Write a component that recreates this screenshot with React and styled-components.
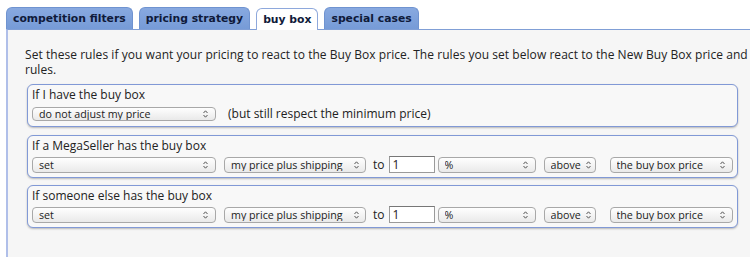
import styled, { createGlobalStyle } from 'styled-components';

const GlobalStyle = createGlobalStyle`
  body {
    margin: 0;
    background: #ffffff;
    overflow: hidden;
    font-family: "Open Sans", "Liberation Sans", Arial, sans-serif;
    color: #222;
  }
`;

const Page = styled.div`
  padding: 7px 0 0 6px;
  height: 257px;
  box-sizing: border-box;
  overflow: hidden;
`;

const TabBar = styled.div`
  display: flex;
  align-items: flex-end;
  gap: 6px;
  height: 22px;
  position: relative;
  z-index: 1;
`;

const Tab = styled.div`
  height: 22px;
  box-sizing: border-box;
  padding: 0 6px;
  display: flex;
  align-items: center;
  font-family: "DejaVu Sans", Verdana, sans-serif;
  font-weight: bold;
  font-size: 10.8px;
  color: #0f1a3a;
  border: 1px solid ${(p) => (p.$active ? '#8ea8dc' : '#6f93d0')};
  border-bottom: none;
  border-radius: 6px 6px 0 0;
  background: ${(p) =>
    p.$active ? '#ffffff' : 'linear-gradient(#88a9e0, #769bd7)'};
  margin-bottom: ${(p) => (p.$active ? '-1px' : '0')};
`;

const Panel = styled.div`
  border-top: 1px solid #809fd6;
  border-left: 2px solid #b0bfe9;
  background: #f6f6f6;
  height: 240px;
  padding: 17px 0 0 17px;
`;

const Intro = styled.p`
  margin: 0;
  width: 732px;
  font-size: 12px;
  line-height: 15px;
  letter-spacing: 0.05px;
`;

const RuleBox = styled.div`
  width: 711px;
  height: 43px;
  box-sizing: border-box;
  margin: ${(p) => p.$top}px 0 0 2px;
  padding: 1px 4px 0;
  border: 1px solid #8199d6;
  border-radius: 6px;
  background: #f8f8f8;
  box-shadow: 0 1px 2px rgba(0, 0, 0, 0.25);
`;

const RuleTitle = styled.div`
  font-size: 12px;
  line-height: 17px;
`;

const Row = styled.div`
  display: flex;
  align-items: center;
  margin-top: 2px;
`;

const SelectWrap = styled.div`
  position: relative;
  width: ${(p) => p.$w}px;
  margin-left: ${(p) => p.$ml || 0}px;
  flex: none;
`;

const NativeSelect = styled.select`
  appearance: none;
  -webkit-appearance: none;
  display: block;
  width: 100%;
  height: ${(p) => (p.$small ? 14 : 16)}px;
  box-sizing: border-box;
  margin: 0;
  padding: 0 10px 0 6px;
  border: 1px solid #a8a8a8;
  border-radius: 4px;
  background: linear-gradient(#fefefe, #e9e9e9);
  font-family: "Open Sans", "Liberation Sans", Arial, sans-serif;
  font-size: 10.7px;
  color: #222;
  line-height: 12px;
  outline: none;
`;

const Arrows = styled.svg`
  position: absolute;
  right: ${(p) => p.$r}px;
  top: 50%;
  transform: translateY(-50%);
  pointer-events: none;
`;

const Note = styled.span`
  font-size: 12px;
  margin-left: ${(p) => p.$ml || 0}px;
`;

const NumberInput = styled.input`
  width: 46px;
  height: 17px;
  box-sizing: border-box;
  margin: 0 0 0 ${(p) => p.$ml}px;
  padding: 0 3px;
  border: 1px solid #9a9a9a;
  border-top-color: #777;
  background: #fff;
  font-family: "Open Sans", "Liberation Sans", Arial, sans-serif;
  font-size: 12px;
  color: #222;
  outline: none;
`;

const Select = ({ w, ml, small, value, arrowRight = 8 }) => (
  <SelectWrap $w={w} $ml={ml}>
    <NativeSelect $small={small} defaultValue={value}>
      <option>{value}</option>
    </NativeSelect>
    <Arrows $r={arrowRight} width="5" height="8" viewBox="0 0 5 8">
      <path d="M0.5 3 L2.5 0.8 L4.5 3" fill="none" stroke="#555" strokeWidth="1" />
      <path d="M0.5 5 L2.5 7.2 L4.5 5" fill="none" stroke="#555" strokeWidth="1" />
    </Arrows>
  </SelectWrap>
);

const AdjustRow = () => (
  <Row>
    <Select w={184} value="set" />
    <Select w={142} ml={8} value="my price plus shipping" arrowRight={7} />
    <Note $ml={7}>to</Note>
    <NumberInput $ml={4} defaultValue="1" />
    <Select w={98} ml={3} value="%" />
    <Select w={52} ml={8} value="above" arrowRight={5} />
    <Select w={123} ml={14} value="the buy box price" />
  </Row>
);

export default function App() {
  return (
    <Page>
      <GlobalStyle />
      <TabBar>
        <Tab>competition filters</Tab>
        <Tab>pricing strategy</Tab>
        <Tab $active>buy box</Tab>
        <Tab>special cases</Tab>
      </TabBar>
      <Panel>
        <Intro>
          Set these rules if you want your pricing to react to the Buy Box
          price. The rules you set below react to the New Buy Box price and
          rules.
        </Intro>
        <RuleBox $top={7}>
          <RuleTitle>If I have the buy box</RuleTitle>
          <Row>
            <Select w={184} small value="do not adjust my price" />
            <Note $ml={12}>(but still respect the minimum price)</Note>
          </Row>
        </RuleBox>
        <RuleBox $top={8}>
          <RuleTitle>If a MegaSeller has the buy box</RuleTitle>
          <AdjustRow />
        </RuleBox>
        <RuleBox $top={7}>
          <RuleTitle>If someone else has the buy box</RuleTitle>
          <AdjustRow />
        </RuleBox>
      </Panel>
    </Page>
  );
}
